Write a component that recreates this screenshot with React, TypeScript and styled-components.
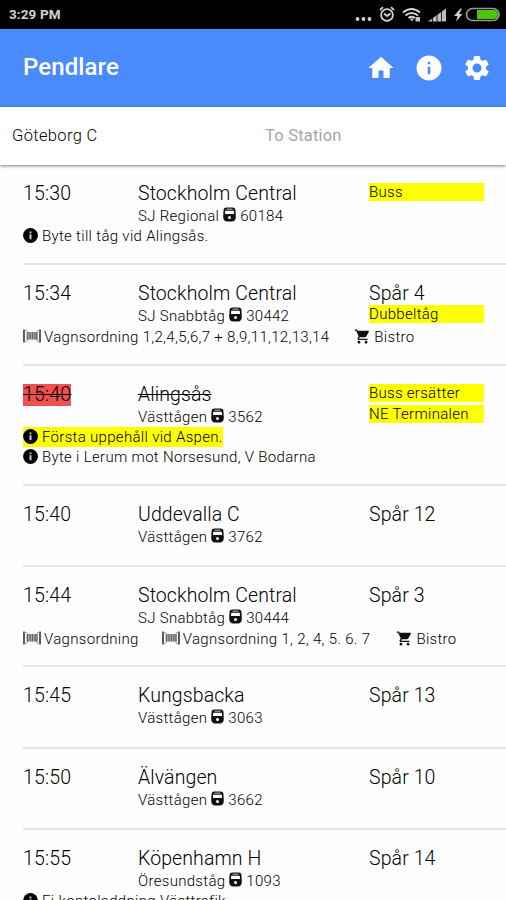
import React from "react";
import styled, { createGlobalStyle } from "styled-components";
import { MdHome, MdInfo, MdSettings, MdShoppingCart } from "react-icons/md";

const GlobalStyle = createGlobalStyle`
  * { box-sizing: border-box; }
  html, body { margin: 0; padding: 0; }
  body { font-family: Roboto, sans-serif; background: #fff; color: #222; overflow: hidden; }
  svg { display: block; flex: none; }
`;

const Screen = styled.div`
  width: 506px;
  height: 900px;
  overflow: hidden;
  display: flex;
  flex-direction: column;
  background: #fefefe;
`;

const StatusBar = styled.div`
  height: 29px;
  flex: none;
  padding: 0 6px 0 9px;
  background: #000;
  color: #d2d2d2;
  display: flex;
  align-items: center;
  justify-content: space-between;
  font-size: 13.5px;
  font-weight: 700;
  line-height: 29px;
`;

const Clock = styled.span`
  letter-spacing: 0.1px;
`;

const AppBar = styled.header`
  height: 78px;
  flex: none;
  background: #4a8bfc;
  color: #fff;
  display: flex;
  align-items: center;
  justify-content: space-between;
  padding: 0 14px 0 23px;
`;

const Title = styled.h1`
  margin: 0 0 2px;
  font-size: 24px;
  line-height: 28px;
  font-weight: 500;
  letter-spacing: 0.1px;
`;

const Actions = styled.nav`
  display: flex;
  gap: 18px;
`;

const StationBar = styled.div`
  height: 58px;
  flex: none;
  display: flex;
  align-items: center;
  padding: 0 12px 2px;
  background: #fff;
  font-size: 16.5px;
  box-shadow: 0 1px 3px rgba(0, 0, 0, 0.5);
  z-index: 1;
`;

const Station = styled.div<{ $placeholder?: boolean }>`
  width: ${(p) => (p.$placeholder ? "auto" : "253px")};
  font-weight: ${(p) => (p.$placeholder ? 400 : 300)};
  color: ${(p) => (p.$placeholder ? "#a6a6a6" : "#000")};
  letter-spacing: ${(p) => (p.$placeholder ? "0.2px" : "0.35px")};
`;

const List = styled.main`
  padding-left: 23px;
  display: flex;
  flex-direction: column;
`;

const Row = styled.article<{ $height: number }>`
  height: ${(p) => p.$height}px;
  flex: none;
  border-bottom: 2px solid #e4e4e4;
  padding-top: 18px;
`;

const Grid = styled.div`
  display: grid;
  grid-template-columns: 115px 231px 115px;
  height: 43px;
`;

const Large = styled.div<{ $cancelled?: boolean }>`
  font-size: 19.5px;
  line-height: 22px;
  height: 22px;
  font-weight: 300;
  letter-spacing: 0.1px;
  color: #000;
  white-space: nowrap;
  text-decoration: ${(p) => (p.$cancelled ? "line-through" : "none")};
`;

const Time = styled(Large)`
  justify-self: start;
  align-self: start;
  letter-spacing: 0.2px;
  background: ${(p) => (p.$cancelled ? "#f25050" : "transparent")};
`;

const Service = styled.div`
  height: 21px;
  display: flex;
  align-items: center;
  gap: 3px;
  font-size: 15px;
  font-weight: 300;
  letter-spacing: 0.3px;
  color: #000;
  white-space: nowrap;
`;

const TrackCell = styled.div`
  display: flex;
  flex-direction: column;
`;

const Tag = styled.div`
  height: 18px;
  margin: 0 0 3px;
  background: #ff0;
  color: #000;
  font-size: 15px;
  font-weight: 300;
  line-height: 18px;
  letter-spacing: 0.3px;
  white-space: nowrap;
`;

const Note = styled.div<{ $highlight?: boolean }>`
  width: max-content;
  height: 20px;
  display: flex;
  align-items: center;
  gap: 4px;
  font-size: 15px;
  font-weight: 300;
  letter-spacing: 0.31px;
  color: #000;
  background: ${(p) => (p.$highlight ? "#ff0" : "transparent")};
  white-space: nowrap;
`;

const Extras = styled.div`
  display: flex;
  padding-top: 1px;
`;

const Extra = styled(Note)<{ $gap: number }>`
  gap: 3px;
  margin-right: ${(p) => p.$gap}px;
`;

const StatusIcons = () => (
  <svg width="146" height="22" viewBox="354 4 146 22" fill="none">
    <g fill="#d2d2d2">
      <circle cx="357.5" cy="19" r="1.9" />
      <circle cx="363.5" cy="19" r="1.9" />
      <circle cx="369.5" cy="19" r="1.9" />
      <path d="M428 21.500l18-13v13z" opacity=".9" />
      <path d="M460.500 8.500l-6.500 7.500h3.500l-1.500 5.500 6.500-7.500h-3.500l3-5.500z" />
    </g>
    <path d="M432.500 8v14M437 8v14M441.500 8v14" stroke="#000" strokeWidth=".8" />
    <g stroke="#d2d2d2" strokeWidth="1.8">
      <circle cx="387" cy="15" r="5.900" />
      <path d="M380 10l3-2.800M394 10l-3-2.800M384 13.500l3 2.500 3.500-2.500" />
      <path d="M403 12.500q8.500-7 17 0M405.500 15.500q6-5 12.500 0" />
      <path d="M408.500 18q3-2.500 6.500 0" />
    </g>
    <path d="M409.500 18.500l2.500 3 2-3zM415.500 17h4.500v4.500h-4.500z" fill="#c4c4c4" />
    <rect x="466.500" y="8.500" width="32.500" height="12" rx="6" stroke="#999" strokeWidth="1.700" />
    <path d="M477 10h16.500a4.500 4.500 0 0 1 0 9H477z" fill="#4cc60b" />
  </svg>
);

const TrainIcon = () => (
  <svg width="15" height="17" viewBox="0 0 15 17">
    <path fill="#111" d="M4.500 0.500h6q3 0 3 3l.3 6q0 5-4 5H5.200q-4 0-4-5l.3-6q0-3 3-3z" />
    <path fill="#fff" d="M3.200 3.700h8.600l.2 3.300H3zM4.500 1.700h6v.7h-6z" />
    <circle cx="7.500" cy="10.500" r="1.500" fill="#fff" />
  </svg>
);

const InfoIcon = () => (
  <svg width="15" height="17" viewBox="0 0 15 17">
    <circle cx="7.500" cy="7.500" r="7.400" fill="#000" />
    <path fill="#ccc" d="M6.500 3.500h2v1.700h-2zM6.500 6.300h2v5h-2z" />
  </svg>
);

const WagonIcon = () => (
  <svg width="18" height="18" viewBox="0 0 18 18">
    <path d="M1 1.500v13M17 1.500v13" stroke="#333" strokeWidth="1.600" />
    <path d="M1 2.500h2.500M1 13.500h2.500M17 2.500h-2.500M17 13.500h-2.500" stroke="#888" />
    <path d="M3.500 4h11v7.500h-11z" fill="#aaa" />
    <path d="M4.500 3.500v9M7 4v7.500M9.500 4v7.500M12 4v7.500M14 3.500v9" stroke="#666" strokeWidth="1.200" />
  </svg>
);

const CartIcon = styled(MdShoppingCart)`
  width: 17px;
  height: 17px;
  margin-bottom: 2px;
  color: #111;
`;

type ExtraItem = { text: string; kind: "wagon" | "bistro"; gap?: number };
type Departure = {
  time: string;
  destination: string;
  service: string;
  number: string;
  height: number;
  track?: string;
  tags?: string[];
  cancelled?: boolean;
  notes?: { text: string; highlight?: boolean }[];
  extras?: ExtraItem[];
};

const departures: Departure[] = [
  { time: "15:30", destination: "Stockholm Central", service: "SJ Regional", number: "60184", height: 100, tags: ["Buss"], notes: [{ text: "Byte till tåg vid Alingsås." }] },
  {
    time: "15:34", destination: "Stockholm Central", service: "SJ Snabbtåg", number: "30442", height: 101, track: "Spår 4", tags: ["Dubbeltåg"],
    extras: [{ text: "Vagnsordning 1,2,4,5,6,7 + 8,9,11,12,13,14", kind: "wagon", gap: 25 }, { text: "Bistro", kind: "bistro" }],
  },
  {
    time: "15:40", destination: "Alingsås", service: "Västtågen", number: "3562", height: 120, cancelled: true, tags: ["Buss ersätter", "NE Terminalen"],
    notes: [{ text: "Första uppehåll vid Aspen.", highlight: true }, { text: "Byte i Lerum mot Norsesund, V Bodarna" }],
  },
  { time: "15:40", destination: "Uddevalla C", service: "Västtågen", number: "3762", height: 81, track: "Spår 12" },
  {
    time: "15:44", destination: "Stockholm Central", service: "SJ Snabbtåg", number: "30444", height: 100, track: "Spår 3",
    extras: [{ text: "Vagnsordning", kind: "wagon", gap: 23 }, { text: "Vagnsordning 1, 2, 4, 5. 6. 7", kind: "wagon", gap: 26 }, { text: "Bistro", kind: "bistro" }],
  },
  { time: "15:45", destination: "Kungsbacka", service: "Västtågen", number: "3063", height: 82, track: "Spår 13" },
  { time: "15:50", destination: "Älvängen", service: "Västtågen", number: "3662", height: 81, track: "Spår 10" },
  { time: "15:55", destination: "Köpenhamn H", service: "Öresundståg", number: "1093", height: 100, track: "Spår 14", notes: [{ text: "Ej kontoladdning Västtrafik" }] },
];

const DepartureRow = ({ d }: { d: Departure }) => (
  <Row $height={d.height}>
    <Grid>
      <Time $cancelled={d.cancelled}>{d.time}</Time>
      <div>
        <Large $cancelled={d.cancelled}>{d.destination}</Large>
        <Service>
          <span>{d.service}</span>
          <TrainIcon />
          <span>{d.number}</span>
        </Service>
      </div>
      <TrackCell>
        {d.track && <Large>{d.track}</Large>}
        {d.tags?.map((t) => <Tag key={t}>{t}</Tag>)}
      </TrackCell>
    </Grid>
    {d.notes?.map((n) => (
      <Note key={n.text} $highlight={n.highlight}>
        <InfoIcon />
        <span>{n.text}</span>
      </Note>
    ))}
    {d.extras && (
      <Extras>
        {d.extras.map((e) => (
          <Extra key={e.text} $gap={e.gap ?? 0}>
            {e.kind === "wagon" ? <WagonIcon /> : <CartIcon />}
            <span>{e.text}</span>
          </Extra>
        ))}
      </Extras>
    )}
  </Row>
);

export default function App() {
  return (
    <Screen>
      <GlobalStyle />
      <StatusBar>
        <Clock>3:29 PM</Clock>
        <StatusIcons />
      </StatusBar>
      <AppBar>
        <Title>Pendlare</Title>
        <Actions>
          <MdHome size={30} />
          <MdInfo size={30} />
          <MdSettings size={30} />
        </Actions>
      </AppBar>
      <StationBar>
        <Station>Göteborg C</Station>
        <Station $placeholder>To Station</Station>
      </StationBar>
      <List>
        {departures.map((d, i) => <DepartureRow key={i} d={d} />)}
      </List>
    </Screen>
  );
}
